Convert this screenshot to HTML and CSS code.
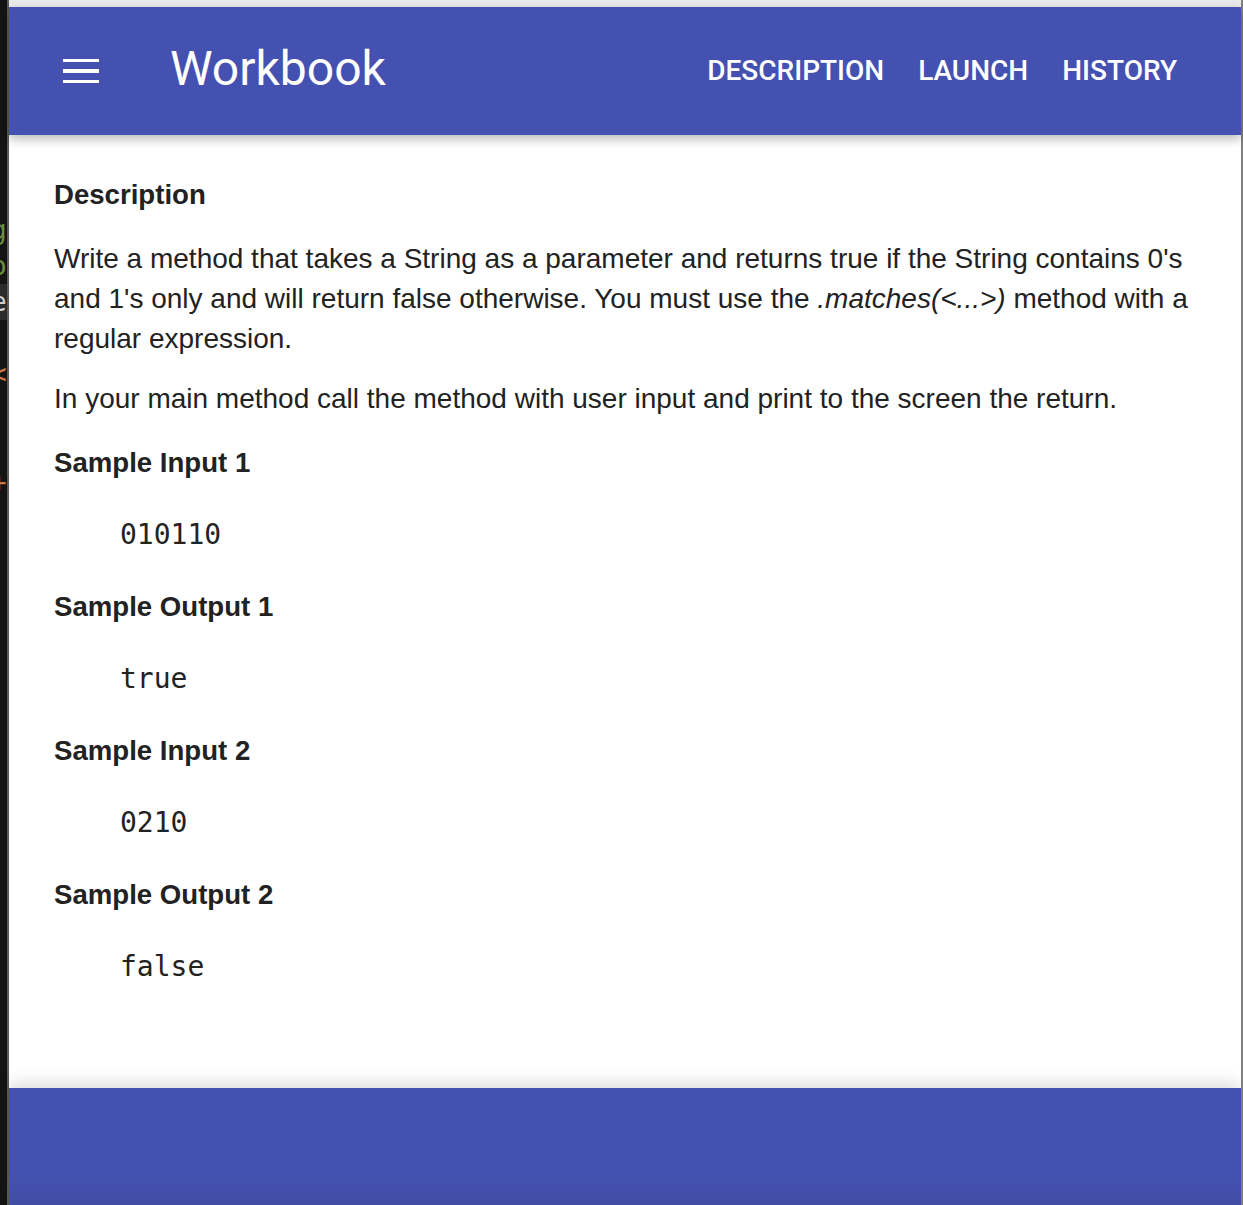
FILE: index.html
```html
<!DOCTYPE html>
<html lang="en">
<head>
<meta charset="utf-8">
<title>Workbook</title>
<link rel="stylesheet" href="styles.css">
</head>
<body>
<div class="app">
  <div class="edge-left">
    <div class="code-peek">
      <span class="ln g1">g</span>
      <span class="ln g1">o</span>
      <span class="ln hl">e</span>
      <span class="ln"> </span>
      <span class="ln or">&lt;</span>
      <span class="ln"> </span>
      <span class="ln"> </span>
      <span class="ln or">+</span>
    </div>
  </div>
  <div class="window">
    <div class="topbar"></div>
    <header class="appbar">
      <div class="menu-btn" aria-label="menu">
        <span class="bar"></span>
        <span class="bar"></span>
        <span class="bar"></span>
      </div>
      <h1 class="title">Workbook</h1>
      <nav class="nav">
        <a class="nav-link">DESCRIPTION</a>
        <a class="nav-link">LAUNCH</a>
        <a class="nav-link">HISTORY</a>
      </nav>
    </header>
    <main class="content">
      <h2 class="heading">Description</h2>
      <p class="para first">Write a method that takes a String as a parameter and returns true if the String contains 0's and 1's only and will return false otherwise. You must use the <em>.matches(&lt;...&gt;)</em> method with a regular expression.</p>
      <p class="para">In your main method call the method with user input and print to the screen the return.</p>
      <div class="samples">
        <h3 class="heading">Sample Input 1</h3>
        <pre class="code">010110</pre>
        <h3 class="heading">Sample Output 1</h3>
        <pre class="code">true</pre>
        <h3 class="heading">Sample Input 2</h3>
        <pre class="code">0210</pre>
        <h3 class="heading">Sample Output 2</h3>
        <pre class="code">false</pre>
      </div>
    </main>
    <footer class="footer"></footer>
  </div>
  <div class="edge-right"></div>
</div>
</body>
</html>
```
FILE: styles.css
```css
html, body {
  margin: 0;
  padding: 0;
}
body {
  background: #141414;
  font-family: "Liberation Sans", Arial, sans-serif;
  color: #222;
}
.app {
  display: flex;
  height: 1205px;
  overflow: hidden;
}
.edge-left {
  width: 7px;
  background: #141414;
  border-right: 2px solid #5c5a58;
  overflow: hidden;
}
.code-peek {
  padding-top: 212px;
  display: flex;
  flex-direction: column;
  font-family: "DejaVu Sans Mono", monospace;
  font-size: 26px;
  line-height: 36px;
}
.ln {
  display: block;
  height: 36px;
  margin-left: -9px;
  white-space: pre;
  color: #888;
}
.g1 { color: #6a8f3f; }
.hl { color: #cfcfcf; background: #2c2c2c; }
.or { color: #c9794a; }
.window {
  flex: 1;
  display: flex;
  flex-direction: column;
  background: #fff;
  min-width: 0;
}
.topbar {
  height: 7px;
  background: #ebebeb;
}
.appbar {
  height: 128px;
  background: #4551b0;
  display: flex;
  align-items: center;
  padding: 0 64px 0 54px;
  box-shadow: 0 4px 10px rgba(0, 0, 0, 0.28);
  position: relative;
  z-index: 2;
  color: #fff;
}
.menu-btn {
  width: 36px;
  display: flex;
  flex-direction: column;
  gap: 7px;
}
.bar {
  display: block;
  height: 3.6px;
  background: #fff;
}
.title {
  margin: 0 0 0 71px;
  font-family: Roboto, "Noto Sans", sans-serif;
  font-weight: 400;
  font-size: 48px;
  line-height: 1;
  flex: 1;
  padding-bottom: 4px;
}
.nav {
  display: flex;
  gap: 34px;
}
.nav-link {
  font-family: Roboto, "Noto Sans", sans-serif;
  font-weight: 500;
  font-size: 28px;
  line-height: 1;
  color: #fff;
}
.content {
  flex: 1;
  padding: 40px 45px 0 45px;
}
.heading {
  margin: 0;
  font-size: 27.6px;
  font-weight: 700;
  line-height: 40px;
}
.para {
  margin: 20px 0 0;
  font-size: 28px;
  line-height: 40px;
}
.para.first {
  margin-top: 24px;
}
.samples {
  margin-top: 24px;
  display: flex;
  flex-direction: column;
  gap: 32px;
}
.code {
  margin: 0;
  padding-left: 66px;
  font-family: "DejaVu Sans Mono", monospace;
  font-size: 28px;
  line-height: 40px;
}
.footer {
  height: 117px;
  background: linear-gradient(to bottom, #4551b0 0%, #4551b0 75%, #414ca4 100%);
  box-shadow: 0 -6px 14px rgba(0, 0, 0, 0.12);
}
.edge-right {
  width: 2px;
  background: #7f7f7f;
}
```
